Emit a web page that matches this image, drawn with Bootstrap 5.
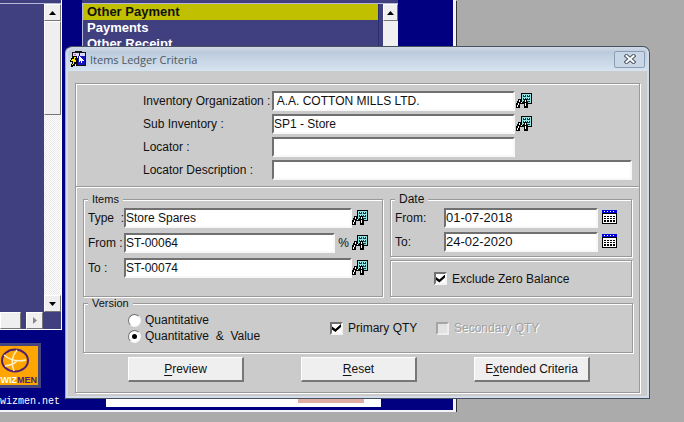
<!DOCTYPE html>
<html lang="en">
<head>
<meta charset="utf-8">
<meta name="viewport" content="width=device-width, initial-scale=1">
<title>Items Ledger Criteria</title>
<link href="https://cdn.jsdelivr.net/npm/bootstrap@5.3.0/dist/css/bootstrap.min.css" rel="stylesheet">
<style>
  :root { --face: #cbcbcb; --slate: #404080; --navy: #000080; --edge: #999; }
  body { background: #ababab; font: 12px/16px "Liberation Sans", Arial, sans-serif; color: #111; overflow: hidden; }

  /* main application window */
  .app-win { height: calc(100vh - 10px); margin-right: 228px; background: var(--navy); border: solid #f4f4fa; border-width: 0 3px 2px 0; box-shadow: 1px 1px 0 #333; overflow: hidden; }
  .pane-left { width: 62px; height: 330px; background: var(--slate); border-right: 1px solid #fff; border-bottom: 1px solid #fff; }
  .pane-cap { height: 4px; background: var(--slate); border-bottom: 1px solid #b8b8d8; }
  .vbar { width: 17px; background: repeating-conic-gradient(#fff 0 25%, #e9e9e9 0 50%) 0 0 / 2px 2px; }
  .bevel { background: #efefef; border: 1px solid; border-color: #fff #777 #777 #fff; padding: 0; }
  .sb-btn { width: 17px; height: 17px; flex: none; }
  .hbar { height: 17px; padding-right: 18px; }
  .thumb-v { height: 94px; }
  .thumb-h { width: 21px; margin-right: 5px; }
  .pane-list { margin-left: 20px; margin-right: 55px; height: 130px; background: var(--slate); }
  .list-rows { border: 1px solid #b8b8d8; border-width: 0 0 0 1px; margin-right: 4px; }
  .list-rows li { font: bold 13px/16px "Liberation Sans", Arial, sans-serif; color: #fff; padding-left: 4px; border-right: 1px solid #283070; white-space: nowrap; }
  .list-rows li.picked { background: #c0c000; color: #111; }
  .thin-bar { width: 15px; background: #f0f0f0; }
  .brand { margin-top: 13px; width: 41px; border: 3px solid #46467c; border-left: 0; line-height: 0; }
  .site { font: 10px/14px "Liberation Mono", monospace; color: #fff; text-decoration: none; margin-top: 7px; }
  .status-strip { margin: auto 72px 3px 44px; height: 43px; background: #fff; padding: 0 17px 0 192px; }
  .status-strip div { height: 39px; background: #dfaea2; }

  /* dialog */
  .dlg { position: absolute; top: 46px; left: 65px; right: 34px; border: 1px solid #465160; border-left-color: #9aa4bc; border-radius: 7px 7px 0 0; background: #d3dce8; padding: 0 2px 2px; }
  .dlg-title { height: 24px; padding: 0 1px 0 2px; background: linear-gradient(#d2dce8, #bccbdc 20%, #d6e3f0); border-radius: 6px 6px 0 0; }
  .dlg-title h1 { font: 11px/20px "Open Sans", "Noto Sans", sans-serif; color: #4b5763; margin-left: 4px; padding-top: 2px; }
  .close-btn { width: 31px; height: 17px; border: 1px solid #8b9cb6; border-radius: 2px; background: #c8d6e6; padding: 0; line-height: 0; margin-right: 1px; }
  .dlg-body { background: var(--face); padding: 12px 7px 3px; }
  .etch { border: 1px solid var(--edge); box-shadow: 1px 1px 0 #fff, inset 1px 1px 0 #fff; border-radius: 0; }

  .org { display: grid; grid-template-columns: 129px 1fr 117px; row-gap: 3px; padding: 7px 7px 6px 67px; border-bottom: 1px solid var(--edge); box-shadow: 0 1px 0 #fff; align-items: center; }
  .wide { grid-column: 2 / 4; }
  .field { height: 20px; min-width: 0; padding: 0 0 1px; border: 2px solid; border-color: #707070 #f8f8f8 #f8f8f8 #707070; border-radius: 0; background: #fff; color: #111; font: 12px/16px "Liberation Sans", Arial, sans-serif; box-shadow: none; }
  .field.lg { font-size: 13px; }
  .pick { border: 0; background: none; padding: 0 0 2px 1px; line-height: 0; flex: none; }
  .lower { padding: 6px 6px 10px 7px; }
  .pair { display: grid; grid-template-columns: 300fr 242fr; column-gap: 7px; padding-right: 1px; }
  legend { float: none; width: auto; font-size: 11px; line-height: 12px; padding: 0 4px; margin: 0; background: var(--face); }
  legend.lg { font-size: 12px; }
  .items { padding: 3px 14px 18px 4px; }
  .items .stack { row-gap: 5px; }
  .items .pick { padding-left: 0; }
  .items label { width: 36px; flex: none; white-space: pre; }
  .dates { padding: 3px 14px 4px 4px; }
  .dates .stack { row-gap: 4px; }
  .dates label { width: 49px; flex: none; }
  .percent { width: 17px; flex: none; text-align: center; }
  .exclude { margin-top: 3px; padding-left: 43px; }
  .version { padding: 3px 0 8px 4px; }
  .version-grid { display: grid; grid-template-columns: 202px 106px auto; align-items: center; padding-left: 40px; }

  .tick, .dot { appearance: none; width: 13px; height: 13px; margin: 0; background: #fff; border: 2px solid; border-color: #707070 #f4f4f4 #f4f4f4 #707070; display: grid; place-items: center; flex: none; }
  .tick + label { padding-left: 5px; }
  .dot { border-width: 1px; border-radius: 50%; }
  .tick:checked::before { content: ""; width: 9px; height: 8px; background: #000; clip-path: polygon(0 30%, 38% 62%, 100% 0, 100% 38%, 38% 100%, 0 68%); }
  .dot:checked::before { content: ""; width: 5px; height: 5px; border-radius: 50%; background: #000; }
  .tick:disabled { background: #e2e2e2; border-color: #a5a5a5 #eee #eee #a5a5a5; opacity: 1; }
  .ghosted { color: #a0a0a0; text-shadow: 1px 1px 0 #fff; }
  .actions { margin-top: 4px; padding: 0 43px 0 45px; }
  .push { width: 116px; height: 25px; background: #efefef; border: solid; border-width: 1px 2px 2px 1px; border-color: #fff #777 #777 #fff; border-radius: 0; padding: 0; font-size: 12px; line-height: 20px; color: #111; }
  .push u { text-underline-offset: 2px; }
</style>
<script src="https://cdn.jsdelivr.net/npm/bootstrap@5.3.0/dist/js/bootstrap.bundle.min.js"></script>
</head>
<body>
<svg width="0" height="0" class="position-absolute" aria-hidden="true">
  <symbol id="find" viewBox="0 0 16 15" shape-rendering="crispEdges">
    <path fill="#000" d="M5 0h11v11H5z"/>
    <path fill="#8ee4e2" d="M6 1h9v9H6z"/>
    <path fill="#123c3c" d="M7 2h3v2H7zM11 2h3v2h-3zM7 5h3v2H7zM11 5h3v2h-3zM11 8h3v1h-3zM7 8h2v1H7z"/>
    <path fill="#c8ffff" d="M8 2h1v1H8zM12 2h1v1h-1zM8 5h1v1H8zM12 5h1v1h-1z"/>
    <path fill="#000" d="M2 6h3v2h1v1h1V8h1V6h3v3h1v6H8v-4H4v4H0v-5h1V8h1z"/>
    <path fill="#fff" d="M3 7h1v2H3zM2 10h1v2H2zM1 12h1v2H1zM9 7h1v2H9zM9 10h1v3H9zM5 9h1v1H5z"/>
  </symbol>
  <symbol id="cal" viewBox="0 0 15 14" shape-rendering="crispEdges">
    <path fill="#000" d="M0 3h15v11H0z"/><path fill="#0000e0" d="M0 0h15v3H0z"/>
    <path fill="#fff" d="M2 1h1v1H2zM5 1h1v1H5zM8 1h1v1H8zM11 1h1v1h-1zM1 4h13v9H1z"/>
    <path fill="#000" d="M2 6h2v1H2zM5 6h2v1H5zM8 6h2v1H8zM11 6h2v1h-2zM2 8h2v1H2zM5 8h2v1H5zM8 8h2v1H8zM11 8h2v1h-2zM2 10h2v2H2zM5 10h2v2H5zM8 10h2v2H8zM11 10h2v2h-2z"/>
  </symbol>
</svg>

<main class="app-win d-flex flex-column">
  <div class="d-flex flex-grow-1">
    <div>
      <section class="pane-left d-flex flex-column" aria-label="Modules">
        <div class="pane-cap"></div>
        <div class="d-flex flex-grow-1 justify-content-end">
          <div class="vbar d-flex flex-column">
            <button type="button" class="bevel sb-btn d-flex align-items-center justify-content-center" aria-label="Scroll up"><svg width="7" height="4"><path d="M3.500 0L7 4H0z"/></svg></button>
            <div class="bevel thumb-v"></div>
            <button type="button" class="bevel sb-btn mt-auto d-flex align-items-center justify-content-center" aria-label="Scroll down"><svg width="7" height="4"><path d="M0 0h7L3.500 4z"/></svg></button>
          </div>
        </div>
        <div class="hbar d-flex">
          <div class="bevel thumb-h"></div>
          <button type="button" class="bevel sb-btn d-flex align-items-center justify-content-center" aria-label="Scroll right"><svg width="4" height="7"><path fill="#888" d="M0 0L4 3.500 0 7z"/></svg></button>
        </div>
      </section>
      <div class="brand">
        <svg width="38" height="39" viewBox="0 0 38 39" role="img" aria-label="Wizmen">
          <path fill="#ffa500" d="M0 0h38v39H0z"/>
          <ellipse cx="15" cy="14.500" rx="13" ry="11" fill="none" stroke="#50206c" stroke-width="2"/>
          <path d="M4 9q9 8 22 5M17 4q-8 9-3 21M5 20q8-1 12-5" fill="none" stroke="#fff0c8" stroke-width="1.500"/>
          <text x="37" y="37" text-anchor="end" font-family="Liberation Sans, sans-serif" font-size="9" font-weight="bold" fill="#4b1c78"><tspan fill="#fff">WIZ</tspan>MEN</text>
        </svg>
      </div>
      <a class="site d-block" href="#">wizmen.net</a>
    </div>
    <div class="flex-grow-1 d-flex flex-column">
      <section class="pane-list" aria-label="Vouchers">
        <div class="pane-cap"></div>
        <div class="d-flex h-100">
          <ul class="list-rows list-unstyled mb-0 flex-grow-1">
            <li class="picked">Other Payment</li>
            <li>Payments</li>
            <li>Other Receipt</li>
          </ul>
          <div class="thin-bar"><button type="button" class="bevel sb-btn w-100 d-flex align-items-center justify-content-center" aria-label="Scroll up"><svg width="7" height="4"><path d="M3.500 0L7 4H0z"/></svg></button></div>
        </div>
      </section>
      <div class="status-strip"><div></div></div>
    </div>
  </div>
</main>

<form class="dlg" role="dialog" aria-labelledby="dlg-name">
  <header class="dlg-title d-flex align-items-center">
    <svg width="16" height="16" viewBox="0 0 16 16" shape-rendering="crispEdges" aria-hidden="true">
      <path fill="#111" d="M2 1h3V0h7v1h4v14H6v-2H2z"/><path fill="#d8d8ff" d="M3 2h6v5H3zM10 2h5v4h-5z"/><path fill="#e060a0" d="M4 3h2v1H4z"/>
      <path fill="#1414c0" d="M8 5h7v9H8z"/><path fill="#fff" d="M9 5h1v1h1v1h1v1h1v1h1v1h-2v2h-1v-2h-1v1H9z"/>
      <path fill="#000" d="M3 5h4v3H6v1h2v2H7v2H5v2H3v1H1v-3h1v-2H0V9h1V7h2z"/><path fill="#ffee00" d="M4 6h2v1H5v2h1v2H4v2H3v1H2v-1h1v-3H1V9h1V8h2z"/>
    </svg>
    <h1 id="dlg-name" class="mb-0 me-auto">Items Ledger Criteria</h1>
    <button type="button" class="close-btn" aria-label="Close"><svg width="12" height="10" viewBox="0 0 12 10"><path d="M2.500 2l7 6M9.500 2l-7 6" stroke="#4c5562" stroke-width="4" stroke-linecap="square"/><path d="M2.500 2l7 6M9.500 2l-7 6" stroke="#fff" stroke-width="2" stroke-linecap="square"/></svg></button>
  </header>
  <div class="dlg-body">
    <div class="etch">
      <div class="org">
        <label for="org">Inventory Organization :</label>
        <input id="org" class="form-control field" value=" A.A. COTTON MILLS LTD.">
        <button type="button" class="pick text-start" aria-label="Find organization"><svg width="16" height="15"><use href="#find"/></svg></button>
        <label for="sub">Sub Inventory :</label>
        <input id="sub" class="form-control field" value="SP1 - Store">
        <button type="button" class="pick text-start" aria-label="Find sub inventory"><svg width="16" height="15"><use href="#find"/></svg></button>
        <label for="loc">Locator :</label>
        <input id="loc" class="form-control field"><span></span>
        <label for="locd">Locator Description :</label>
        <input id="locd" class="form-control field wide">
      </div>
      <div class="lower">
        <div class="pair">
          <fieldset class="etch items">
            <legend>Items</legend>
            <div class="stack d-flex flex-column">
              <div class="d-flex align-items-center"><label for="type">Type  :</label><input id="type" class="form-control field" value="Store Spares"><button type="button" class="pick" aria-label="Find type"><svg width="16" height="15"><use href="#find"/></svg></button></div>
              <div class="d-flex align-items-center"><label for="ifrom">From :</label><input id="ifrom" class="form-control field" value="ST-00064"><span class="percent">%</span><button type="button" class="pick" aria-label="Find first item"><svg width="16" height="15"><use href="#find"/></svg></button></div>
              <div class="d-flex align-items-center"><label for="ito">To :</label><input id="ito" class="form-control field" value="ST-00074"><button type="button" class="pick" aria-label="Find last item"><svg width="16" height="15"><use href="#find"/></svg></button></div>
            </div>
          </fieldset>
          <div class="d-flex flex-column">
            <fieldset class="etch dates">
              <legend class="lg">Date</legend>
              <div class="stack d-flex flex-column">
                <div class="d-flex align-items-center"><label for="dfrom">From:</label><input id="dfrom" class="form-control field lg" value="01-07-2018"><button type="button" class="pick ps-1" aria-label="Choose start date"><svg width="15" height="14"><use href="#cal"/></svg></button></div>
                <div class="d-flex align-items-center"><label for="dto">To:</label><input id="dto" class="form-control field lg" value="24-02-2020"><button type="button" class="pick ps-1" aria-label="Choose end date"><svg width="15" height="14"><use href="#cal"/></svg></button></div>
              </div>
            </fieldset>
            <div class="etch exclude flex-grow-1 d-flex align-items-center">
              <input type="checkbox" class="tick" id="zero" checked><label for="zero">Exclude Zero Balance</label>
            </div>
          </div>
        </div>
        <fieldset class="etch version">
          <legend>Version</legend>
          <div class="version-grid">
            <div>
              <div class="d-flex align-items-center"><input type="radio" name="version" class="dot" id="qty"><label for="qty" class="ps-1">Quantitative</label></div>
              <div class="d-flex align-items-center"><input type="radio" name="version" class="dot" id="val" checked><label for="val" class="ps-1">Quantitative&nbsp; &amp;&nbsp; Value</label></div>
            </div>
            <div class="d-flex align-items-center"><input type="checkbox" class="tick" id="pri" checked><label for="pri">Primary QTY</label></div>
            <div class="d-flex align-items-center"><input type="checkbox" class="tick" id="sec" disabled><label for="sec" class="ghosted">Secondary QTY</label></div>
          </div>
        </fieldset>
        <div class="actions d-flex justify-content-between">
          <button type="button" class="btn push"><u>P</u>review</button>
          <button type="reset" class="btn push"><u>R</u>eset</button>
          <button type="button" class="btn push">E<u>x</u>tended Criteria</button>
        </div>
      </div>
    </div>
  </div>
</form>
</body>
</html>
